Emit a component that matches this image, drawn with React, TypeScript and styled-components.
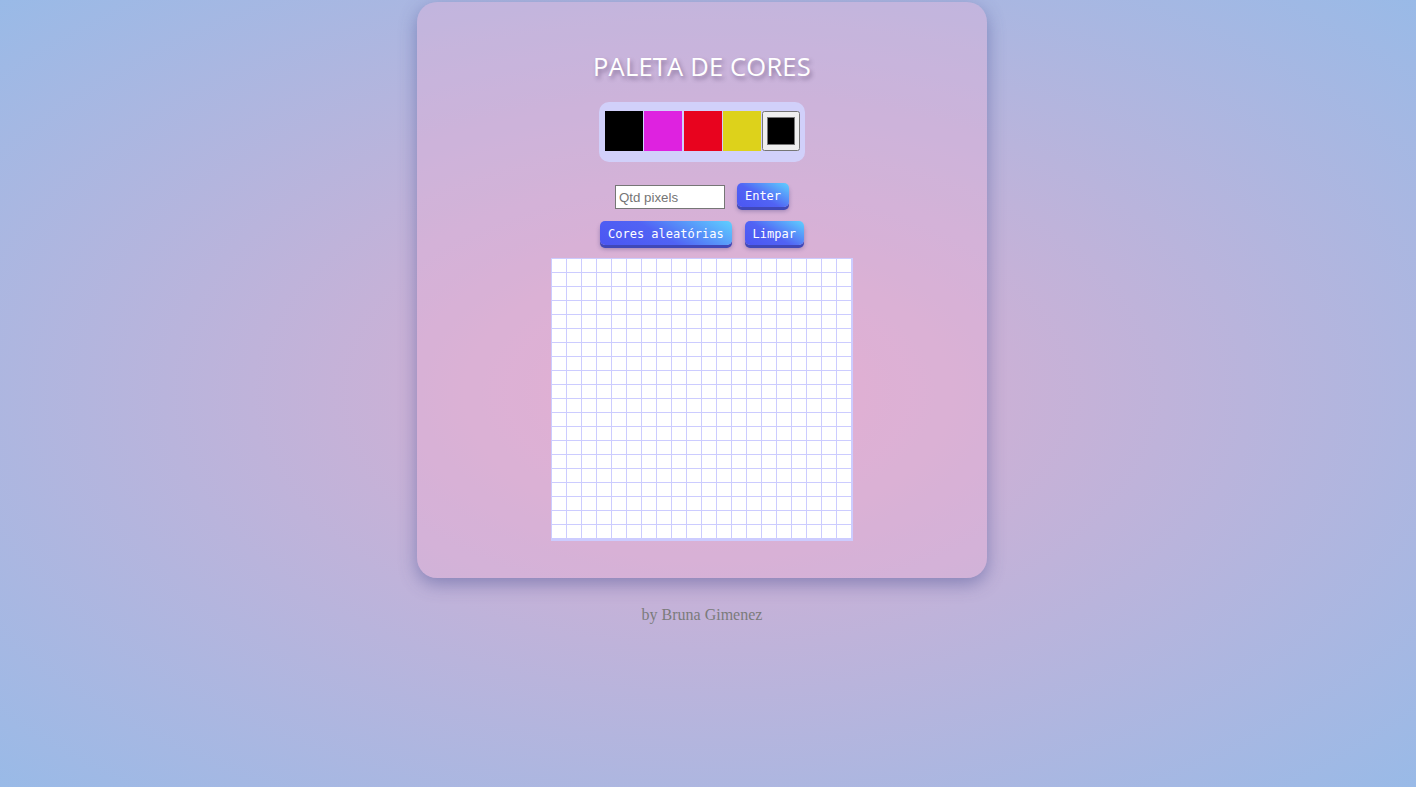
import React, { useState } from "react";
import styled, { createGlobalStyle } from "styled-components";

const GlobalStyle = createGlobalStyle`
  html, body {
    margin: 0;
    padding: 0;
    min-height: 100%;
  }
  body {
    min-height: 100vh;
    background: radial-gradient(ellipse farthest-corner at 50% 50%, #dfadcf 0%, #99bae7 100%);
    background-attachment: fixed;
    font-family: "Liberation Serif", serif;
  }
`;

const Page = styled.div`
  display: flex;
  flex-direction: column;
  align-items: center;
  padding-top: 2px;
  margin-right: 12px;
`;

const Card = styled.main`
  width: 570px;
  height: 576px;
  box-sizing: border-box;
  padding-top: 49px;
  border-radius: 20px;
  background: rgba(248, 178, 214, 0.3);
  box-shadow: 0 6px 18px rgba(60, 70, 140, 0.45);
  display: flex;
  flex-direction: column;
  align-items: center;
`;

const Title = styled.h1`
  margin: 0;
  font-family: "Open Sans", "Noto Sans", sans-serif;
  font-weight: 400;
  font-size: 25.5px;
  line-height: 30px;
  letter-spacing: 0.2px;
  color: #ffffff;
  text-shadow: 2px 3px 4px rgba(60, 40, 80, 0.45);
`;

const Palette = styled.div`
  margin-top: 21px;
  display: flex;
  gap: 1.25px;
  padding: 9px 5px 11px 6px;
  background: #d1d0fa;
  border-radius: 10px;
`;

const Swatch = styled.div<{ $color: string }>`
  width: 38px;
  height: 40px;
  background: ${(p) => p.$color};
`;

const ColorPicker = styled.input`
  width: 38px;
  height: 40px;
  margin: 0;
  box-sizing: border-box;
  cursor: pointer;
`;

const Row = styled.div<{ $gap: number; $top: number }>`
  display: flex;
  align-items: flex-start;
  gap: ${(p) => p.$gap}px;
  margin-top: ${(p) => p.$top}px;
`;

const SizeInput = styled.input`
  margin-top: 2px;
  width: 110px;
  height: 24px;
  box-sizing: border-box;
  padding: 1px 3px;
  border: 1px solid #767676;
  border-radius: 0;
  font-family: "Liberation Sans", Arial, sans-serif;
  font-size: 13.3px;
  background: #fff;
  &::placeholder {
    color: #757575;
  }
`;

const Button = styled.button`
  height: 24px;
  padding: 2px 8px 0;
  border: none;
  border-radius: 5px;
  font-family: "DejaVu Sans Mono", monospace;
  font-size: 12px;
  color: #ffffff;
  background: linear-gradient(30deg, #4b56f2 0%, #5163f4 45%, #5fd0ff 100%);
  box-shadow: 0 3px 0 #4048b8, 0 4px 4px rgba(40, 40, 110, 0.35);
  cursor: pointer;
`;

const Board = styled.div`
  margin-top: 13px;
  display: grid;
  grid-template-columns: repeat(20, 14px);
  grid-auto-rows: 13px;
  gap: 1px;
  padding: 1px;
  border-right: 1px solid #ccccff;
  border-bottom: 2px solid #ccccff;
  background: #ccccff;
`;

const Cell = styled.div<{ $color: string }>`
  background: ${(p) => p.$color};
`;

const Footer = styled.footer`
  margin-top: 28px;
  font-family: "Liberation Serif", serif;
  font-size: 16px;
  line-height: 18px;
  color: #7b7b7b;
`;

const initialColors = ["#000000", "#de22e0", "#e8031e", "#ddd21b"];

export default function App() {
  const [colors, setColors] = useState(initialColors);
  const [picker, setPicker] = useState("#000000");
  const [selected, setSelected] = useState("#000000");
  const [size, setSize] = useState(20);
  const [text, setText] = useState("");
  const [cells, setCells] = useState<string[]>(Array(400).fill("#ffffff"));

  const randomColor = () =>
    "#" + Math.floor(Math.random() * 0xffffff).toString(16).padStart(6, "0");

  const applySize = () => {
    let n = parseInt(text, 10);
    if (isNaN(n)) return;
    n = Math.max(5, Math.min(50, n));
    setSize(n);
    setCells(Array(n * n).fill("#ffffff"));
  };

  return (
    <>
      <GlobalStyle />
      <Page>
        <Card>
          <Title>PALETA DE CORES</Title>
          <Palette>
            {colors.map((c, i) => (
              <Swatch key={i} $color={c} onClick={() => setSelected(c)} />
            ))}
            <ColorPicker
              type="color"
              value={picker}
              onChange={(e) => {
                setPicker(e.target.value);
                setSelected(e.target.value);
              }}
            />
          </Palette>
          <Row $gap={12} $top={21}>
            <SizeInput
              placeholder="Qtd pixels"
              value={text}
              onChange={(e) => setText(e.target.value)}
            />
            <Button onClick={applySize}>Enter</Button>
          </Row>
          <Row $gap={13} $top={12}>
            <Button
              onClick={() =>
                setColors(["#000000", randomColor(), randomColor(), randomColor()])
              }
            >
              Cores aleatórias
            </Button>
            <Button onClick={() => setCells(Array(size * size).fill("#ffffff"))}>
              Limpar
            </Button>
          </Row>
          <Board style={{ gridTemplateColumns: `repeat(${size}, 14px)` }}>
            {cells.map((c, i) => (
              <Cell
                key={i}
                $color={c}
                onClick={() =>
                  setCells((prev) => prev.map((v, j) => (j === i ? selected : v)))
                }
              />
            ))}
          </Board>
        </Card>
        <Footer>by Bruna Gimenez</Footer>
      </Page>
    </>
  );
}
